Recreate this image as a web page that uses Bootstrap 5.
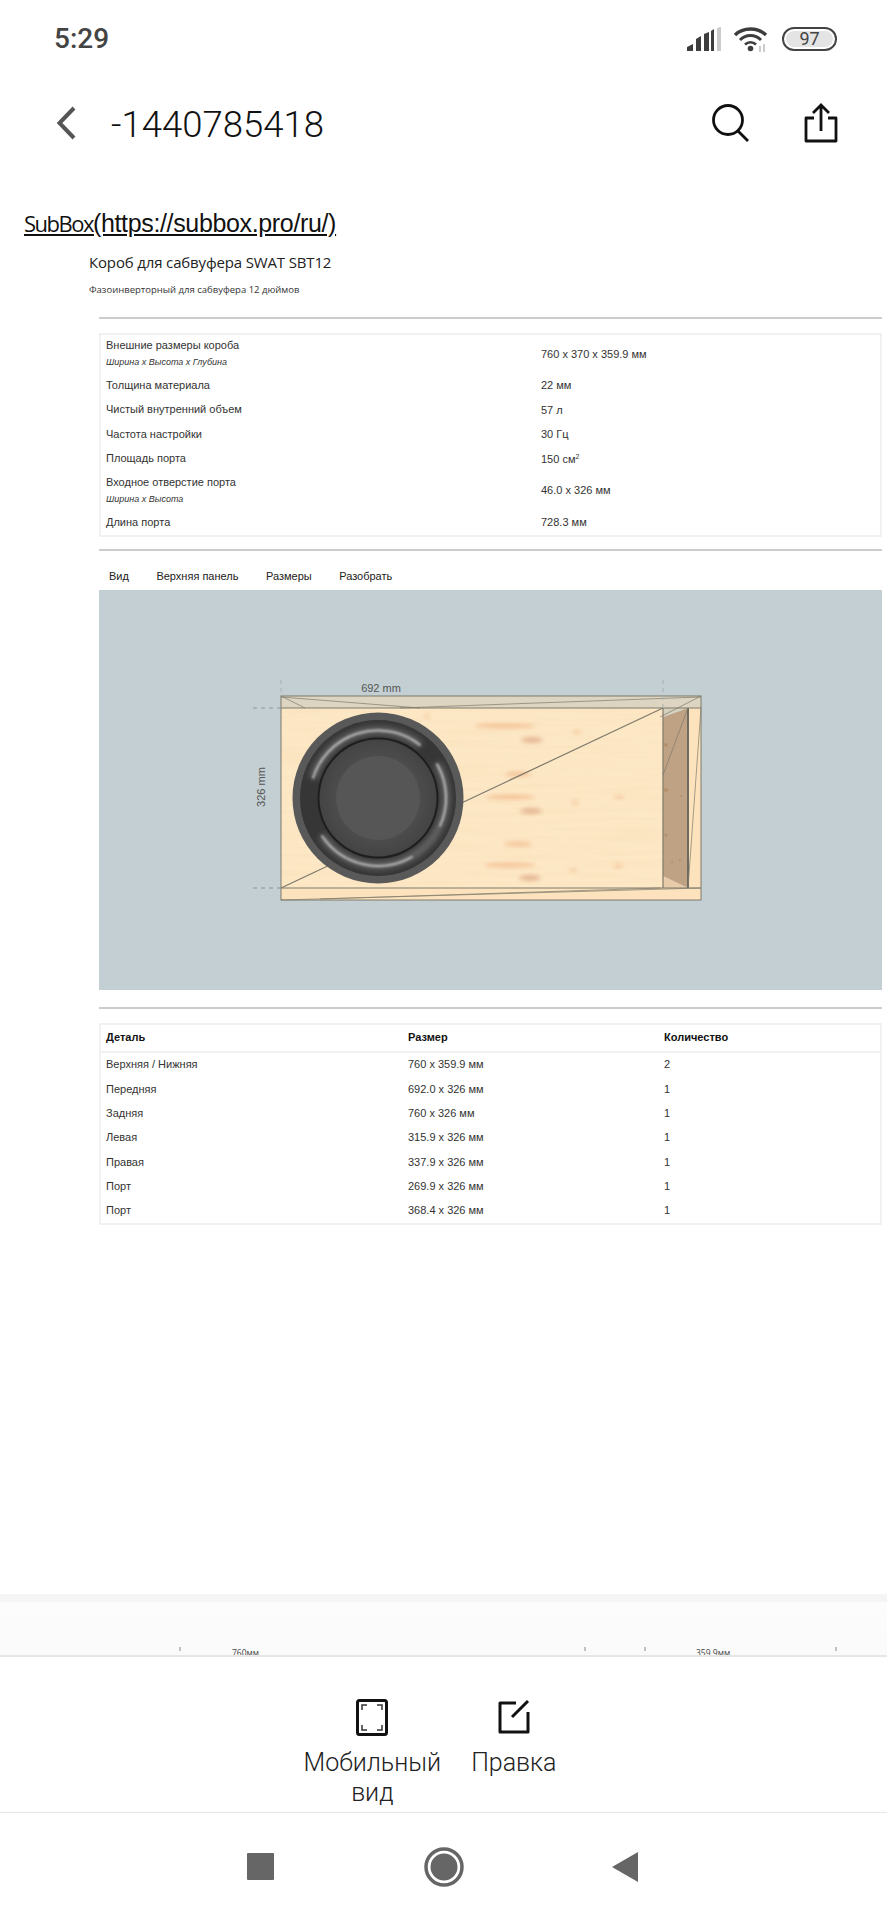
<!DOCTYPE html>
<html lang="ru">

<head>
    <meta charset="UTF-8">
    <meta name="viewport" content="width=device-width, initial-scale=1.0">
    <title>-1440785418</title>

    <link href="https://cdn.jsdelivr.net/npm/bootstrap@5.3.0/dist/css/bootstrap.min.css" rel="stylesheet">

    <style>
        body {
            width: 887px;
            height: 1920px;
            overflow: hidden;
            background: #fff;
            font-family: Roboto, "Liberation Sans", sans-serif;
        }

        .phone {
            height: 1920px;
        }

        /* status bar */
        .status-bar {
            height: 78px;
            padding: 0 50px 0 54px;
        }

        .status-time {
            font-size: 28px;
            font-weight: 500;
            color: #444;
            line-height: 1;
        }

        .battery {
            width: 55px;
            height: 24px;
            border: 2px solid #444;
            border-radius: 12px;
            padding: 2px;
            margin-left: 13px;
        }

        .battery-fill {
            background: #e4e4e4;
            border-radius: 8px;
            color: #444;
            font-size: 18px;
            line-height: 16px;
            height: 16px;
            text-align: center;
        }

        /* app header */
        .app-header {
            height: 90px;
            padding: 0 49px 0 56px;
        }

        .app-title {
            font-size: 36.5px;
            font-weight: 300;
            color: #111;
            line-height: 1;
            margin: 4px 0 0 34px;
        }

        .app-search {
            margin-right: 55px;
        }

        /* document */
        .doc {
            height: 1487px;
            overflow: hidden;
            padding-top: 40px;
        }

        .doc-link {
            margin-left: 24px;
            font-size: 25px;
            line-height: 30px;
            color: #111;
            font-family: "Liberation Sans", sans-serif;
            text-decoration: underline;
            letter-spacing: -.35px;
            height: 30px;
        }

        .doc-link-brand {
            font-family: "Open Sans", sans-serif;
            font-size: 22px;
            letter-spacing: -1.5px;
        }

        .doc-title {
            margin: 12px 0 0 89px;
            font-family: "Open Sans", sans-serif;
            font-size: 15px;
            line-height: 24px;
            color: #222;
            letter-spacing: -.15px;
        }

        .doc-sub {
            margin: 6px 0 0 89px;
            font-family: "Open Sans", sans-serif;
            font-size: 9.5px;
            line-height: 20px;
            color: #333;
        }

        .doc-body {
            margin-left: 99px;
            width: 783px;
            font-family: "Liberation Sans", sans-serif;
            font-size: 11px;
            color: #333;
        }

        .doc-rule {
            height: 2px;
            background: #ccc;
        }

        .spec-box {
            border: 2px solid #f1f1f1;
        }

        .spec-row {
            height: 24.5px;
            padding-left: 5px;
        }

        .spec-row-tall {
            height: 38px;
        }

        .spec-row-port {
            height: 39px;
        }

        .spec-name {
            width: 435px;
            line-height: 17px;
        }

        .spec-name em {
            display: block;
            font-size: 9px;
        }

        .spec-value sup {
            font-size: 7px;
        }

        .view-tabs {
            height: 39px;
            padding: 0 10px 5px;
            gap: 27.5px;
            color: #222;
        }

        .view-canvas {
            height: 400px;
            background: #c3cfd2;
        }

        .view-canvas svg {
            display: block;
        }

        .parts-head {
            height: 28px;
            border-bottom: 2px solid #f1f1f1;
            font-weight: 700;
            color: #111;
        }

        .parts-row {
            height: 24.3px;
        }

        .parts-head,
        .parts-row {
            padding-left: 5px;
        }

        .parts-a {
            width: 302px;
        }

        .parts-b {
            width: 256px;
        }

        /* next page, cut off by the bottom sheet */
        .page-gap {
            margin-top: 369px;
            height: 8px;
            background: #f5f5f5;
        }

        .page-next {
            height: 60px;
            background: linear-gradient(#fcfcfc, #fafafa);
        }

        .page-next svg {
            display: block;
        }

        /* bottom sheet */
        .sheet {
            height: 158px;
            border-top: 2px solid #e6e6e6;
            border-bottom: 1px solid #e6e6e6;
            padding: 42px 27px 0 0;
            gap: 30px;
        }

        .sheet-action {
            color: #222;
            font-size: 25px;
            font-weight: 300;
            line-height: 30px;
            text-align: center;
        }

        .sheet-action svg {
            display: block;
            margin: 0 auto 12px;
        }

        .nav-bar {
            height: 107px;
            padding-right: 3px;
        }

        .nav-home {
            margin: 0 148px 0 150px;
        }
    </style>
</head>

<body>
    <div class="phone d-flex flex-column">

        <!-- Status bar -->
        <div class="status-bar d-flex align-items-center justify-content-between">
            <span class="status-time">5:29</span>
            <div class="d-flex align-items-center">
                <svg width="34" height="24" viewBox="0 0 34 24" class="me-2">
                    <path d="M0 24v-4l6-3v7z M9 24V12l5-3v15z M17 24V7l5-2v19z" fill="#3d3d3d" />
                    <path d="M24 24V4l3-2v22z" fill="#3d3d3d" />
                    <path d="M30 24V1l4-1v24z" fill="#ccc" />
                </svg>
                <svg width="36" height="26" viewBox="0 0 36 26" class="ms-1">
                    <path d="M2 9C10 1 25 1 33 9" fill="none" stroke="#3d3d3d" stroke-width="3.4" />
                    <path d="M7 14C13 8 22 8 28 14" fill="none" stroke="#3d3d3d" stroke-width="3" />
                    <path d="M12 18.500C15 15.500 20 15.500 23 18.500" fill="none" stroke="#3d3d3d" stroke-width="2.600" />
                    <circle cx="17.500" cy="22.500" r="2.800" fill="#3d3d3d" />
                    <path d="M27 20v6M31 18v8" stroke="#ccc" stroke-width="2" />
                </svg>
                <div class="battery">
                    <div class="battery-fill">97</div>
                </div>
            </div>
        </div>

        <!-- Header -->
        <div class="app-header d-flex align-items-center">
            <svg width="21" height="34" viewBox="0 0 21 34">
                <path d="M18 2L3.500 17L18 32" fill="none" stroke="#555" stroke-width="4" />
            </svg>
            <span class="app-title flex-grow-1">-1440785418</span>
            <svg width="37" height="38" viewBox="0 0 37 38" class="app-search">
                <circle cx="16" cy="16" r="14.500" fill="none" stroke="#111" stroke-width="2.800" />
                <path d="M26 27l10 10" stroke="#111" stroke-width="2.800" />
            </svg>
            <svg width="34" height="40" viewBox="0 0 34 40">
                <path d="M10 15H2v23h30V15h-8" fill="none" stroke="#111" stroke-width="2.800" stroke-linejoin="round" />
                <path d="M17 28V3M9 10l8-8 8 8" fill="none" stroke="#111" stroke-width="2.800" />
            </svg>
        </div>

        <!-- Document -->
        <div class="doc">
            <div class="doc-link"><span class="doc-link-brand">SubBox</span>(https://subbox.pro/ru/)</div>
            <div class="doc-title">Короб для сабвуфера SWAT SBT12</div>
            <div class="doc-sub">Фазоинверторный для сабвуфера 12 дюймов</div>

            <div class="doc-body">
                <div class="doc-rule" style="margin-top: 17px"></div>

                <div class="spec-box" style="margin-top: 14px">
                    <div class="spec-row spec-row-tall d-flex align-items-center">
                        <div class="spec-name">Внешние размеры короба<em>Ширина x Высота x Глубина</em></div>
                        <div class="spec-value">760 x 370 x 359.9 мм</div>
                    </div>
                    <div class="spec-row d-flex align-items-center">
                        <div class="spec-name">Толщина материала</div>
                        <div class="spec-value">22 мм</div>
                    </div>
                    <div class="spec-row d-flex align-items-center">
                        <div class="spec-name">Чистый внутренний объем</div>
                        <div class="spec-value">57 л</div>
                    </div>
                    <div class="spec-row d-flex align-items-center">
                        <div class="spec-name">Частота настройки</div>
                        <div class="spec-value">30 Гц</div>
                    </div>
                    <div class="spec-row d-flex align-items-center">
                        <div class="spec-name">Площадь порта</div>
                        <div class="spec-value">150 см<sup>2</sup></div>
                    </div>
                    <div class="spec-row spec-row-port d-flex align-items-center">
                        <div class="spec-name">Входное отверстие порта<em>Ширина x Высота</em></div>
                        <div class="spec-value">46.0 x 326 мм</div>
                    </div>
                    <div class="spec-row d-flex align-items-center">
                        <div class="spec-name">Длина порта</div>
                        <div class="spec-value">728.3 мм</div>
                    </div>
                </div>

                <div class="doc-rule" style="margin-top: 12px"></div>

                <div class="view-tabs d-flex align-items-end">
                    <span>Вид</span>
                    <span>Верхняя панель</span>
                    <span>Размеры</span>
                    <span>Разобрать</span>
                </div>

                <div class="view-canvas">
                    <svg width="783" height="400" viewBox="99 590 783 400">
                        <defs>
                            <filter id="blur1" x="-50%" y="-50%" width="200%" height="200%">
                                <feGaussianBlur stdDeviation="2.200" />
                            </filter>
                            <filter id="blur2" x="-20%" y="-20%" width="140%" height="140%">
                                <feGaussianBlur stdDeviation="1" />
                            </filter>
                            <filter id="blur3" x="-20%" y="-20%" width="140%" height="140%">
                                <feGaussianBlur stdDeviation="3" />
                            </filter>
                            <filter id="grain" x="0" y="0" width="100%" height="100%">
                                <feTurbulence type="fractalNoise" baseFrequency=".012 .22" numOctaves="3" seed="4" />
                                <feColorMatrix values="0 0 0 0 .93  0 0 0 0 .72  0 0 0 0 .45  0 0 0 1.100 -.38" />
                            </filter>
                            <radialGradient id="cone">
                                <stop offset="0" stop-color="#595959" />
                                <stop offset=".7" stop-color="#575757" />
                                <stop offset=".72" stop-color="#4c4c4c" />
                                <stop offset="1" stop-color="#444" />
                            </radialGradient>
                        </defs>

                        <!-- box -->
                        <rect x="281" y="708" width="382" height="180" fill="#fde8c6" />
                        <rect x="281" y="708" width="382" height="180" filter="url(#grain)" opacity=".7" />
                        <g fill="#eda877" filter="url(#blur1)" opacity=".55">
                            <ellipse cx="505" cy="726" rx="30" ry="2.500" />
                            <ellipse cx="518" cy="774" rx="13" ry="2.500" />
                            <ellipse cx="510" cy="797" rx="24" ry="2.500" />
                            <ellipse cx="518" cy="844" rx="14" ry="2.500" />
                            <ellipse cx="510" cy="865" rx="26" ry="2.500" />
                            <ellipse cx="577" cy="732" rx="4" ry="1.500" />
                            <ellipse cx="619" cy="797" rx="5" ry="1.500" />
                            <ellipse cx="575" cy="802" rx="4" ry="1.500" />
                            <ellipse cx="618" cy="866" rx="5" ry="1.500" />
                            <ellipse cx="573" cy="870" rx="4" ry="1.500" />
                            <ellipse cx="427" cy="716" rx="3" ry="1.500" />
                        </g>
                        <g fill="#dca482" filter="url(#blur1)" opacity=".7">
                            <ellipse cx="532" cy="740" rx="11" ry="3" />
                            <ellipse cx="531" cy="811" rx="11" ry="3" />
                            <ellipse cx="530" cy="878" rx="11" ry="3" />
                        </g>
                        <rect x="281" y="696" width="420" height="12" fill="#ddd5c2" />
                        <rect x="281" y="888" width="420" height="12" fill="#fde3bd" />
                        <rect x="688" y="708" width="13" height="180" fill="#fde3bd" />
                        <path d="M663 717L688 708V888L663 876Z" fill="#bfa284" />
                        <path d="M663 876L688 888H663Z" fill="#e8cba8" />
                        <path d="M663 708H688L663 717Z" fill="#d6d0bf" />
                        <g fill="#b08a64" opacity=".7">
                            <circle cx="666" cy="745" r="2" />
                            <circle cx="666" cy="790" r="2" />
                            <circle cx="666" cy="835" r="1.500" />
                            <circle cx="672" cy="800" r="1" />
                            <circle cx="681" cy="796" r="1" />
                            <circle cx="672" cy="862" r="1" />
                            <circle cx="680" cy="860" r="1" />
                        </g>

                        <!-- mesh lines -->
                        <g fill="none" stroke="#7f7a6c" stroke-width="1">
                            <rect x="281" y="696" width="420" height="204" />
                            <path d="M281 708H701M281 888H701M663 708V888" stroke-width="1.200" />
                            <path d="M688 708V888" stroke-width="2" stroke="#6f6a60" />
                            <path d="M281 696L305 708M281 697L420 708M400 708L701 697M281 900L701 888M320 899L660 888M688 888L701 708M663 775L688 708M660 717L701 696" opacity=".7" />
                            <path d="M281 888L663 708" stroke-width="1.200" />
                        </g>
                        <path d="M281 680V696M663 680V708" stroke="#aab2b2" stroke-dasharray="4 4" fill="none" />
                        <path d="M253 708H281M253 888H281" stroke="#8f9698" stroke-dasharray="4 4" fill="none" />
                        <text x="381" y="692" text-anchor="middle" font-size="11" font-family="Liberation Sans" fill="#555">692 mm</text>
                        <text transform="translate(265 787) rotate(-90)" text-anchor="middle" font-size="11" font-family="Liberation Sans" fill="#555">326 mm</text>

                        <!-- speaker -->
                        <circle cx="378" cy="798" r="85.500" fill="#595959" />
                        <circle cx="378" cy="798" r="78" fill="#363636" />
                        <g fill="none" stroke="#6a6a6a" stroke-width="7" filter="url(#blur3)">
                            <path d="M313 778A68 68 0 0 1 420 745" />
                            <path d="M437 764A68 68 0 0 1 440 826" />
                            <path d="M322 836A68 68 0 0 0 444 814" />
                        </g>
                        <g fill="none" stroke="#c8c8c8" stroke-width="1.800" stroke-linecap="round" filter="url(#blur2)">
                            <path d="M313 778A68 68 0 0 1 420 745" />
                            <path d="M437 764A68 68 0 0 1 440 826" />
                            <path d="M322 836A68 68 0 0 0 412 857" />
                        </g>
                        <circle cx="378" cy="798" r="60.500" fill="#1e1e1e" />
                        <circle cx="378" cy="798" r="58.500" fill="url(#cone)" />
                        <circle cx="378" cy="798" r="42" fill="#565656" />
                    </svg>
                </div>

                <div class="doc-rule" style="margin-top: 17px"></div>

                <div class="spec-box" style="margin-top: 14px">
                    <div class="parts-head d-flex align-items-center">
                        <div class="parts-a">Деталь</div>
                        <div class="parts-b">Размер</div>
                        <div>Количество</div>
                    </div>
                    <div class="parts-row d-flex align-items-center">
                        <div class="parts-a">Верхняя / Нижняя</div>
                        <div class="parts-b">760 x 359.9 мм</div>
                        <div>2</div>
                    </div>
                    <div class="parts-row d-flex align-items-center">
                        <div class="parts-a">Передняя</div>
                        <div class="parts-b">692.0 x 326 мм</div>
                        <div>1</div>
                    </div>
                    <div class="parts-row d-flex align-items-center">
                        <div class="parts-a">Задняя</div>
                        <div class="parts-b">760 x 326 мм</div>
                        <div>1</div>
                    </div>
                    <div class="parts-row d-flex align-items-center">
                        <div class="parts-a">Левая</div>
                        <div class="parts-b">315.9 x 326 мм</div>
                        <div>1</div>
                    </div>
                    <div class="parts-row d-flex align-items-center">
                        <div class="parts-a">Правая</div>
                        <div class="parts-b">337.9 x 326 мм</div>
                        <div>1</div>
                    </div>
                    <div class="parts-row d-flex align-items-center">
                        <div class="parts-a">Порт</div>
                        <div class="parts-b">269.9 x 326 мм</div>
                        <div>1</div>
                    </div>
                    <div class="parts-row d-flex align-items-center">
                        <div class="parts-a">Порт</div>
                        <div class="parts-b">368.4 x 326 мм</div>
                        <div>1</div>
                    </div>
                </div>
            </div>

            <div class="page-gap"></div>
            <div class="page-next">
                <svg width="887" height="60" viewBox="0 1605 887 60">
                    <path d="M180 1650v4M585 1650v4M645 1650v4M836 1650v4" stroke="#888" />
                    <text x="232" y="1659" font-size="8.500" font-family="Open Sans" fill="#444">760мм</text>
                    <text x="696" y="1659" font-size="8.500" font-family="Open Sans" fill="#444">359.9мм</text>
                </svg>
            </div>
        </div>

        <!-- Bottom sheet -->
        <div class="sheet d-flex justify-content-center">
            <div class="sheet-action">
                <svg width="32" height="37" viewBox="0 0 32 37">
                    <rect x="1.500" y="1.500" width="29" height="34" rx="2" fill="none" stroke="#111" stroke-width="3" />
                    <path d="M6 11V6h5M26 11V6h-5M6 26v5h5M26 26v5h-5" fill="none" stroke="#333" stroke-width="1.500" />
                </svg>
                Мобильный<br>вид
            </div>
            <div class="sheet-action">
                <svg width="34" height="37" viewBox="0 0 34 37">
                    <path d="M19 4H3v29h28V13" fill="none" stroke="#111" stroke-width="3" stroke-linejoin="round" />
                    <path d="M15 18L31 2" fill="none" stroke="#111" stroke-width="3" />
                </svg>
                Правка
            </div>
        </div>

        <!-- Android nav -->
        <div class="nav-bar d-flex align-items-center justify-content-center">
            <svg width="27" height="27" viewBox="0 0 27 27">
                <rect width="27" height="27" rx="1" fill="#666" />
            </svg>
            <svg width="40" height="40" viewBox="0 0 40 40" class="nav-home">
                <circle cx="20" cy="20" r="18" fill="none" stroke="#666" stroke-width="3.500" />
                <circle cx="20" cy="20" r="13.500" fill="#666" />
            </svg>
            <svg width="26" height="30" viewBox="0 0 26 30">
                <path d="M26 0V30L0 15Z" fill="#666" />
            </svg>
        </div>
    </div>

    <script src="https://cdn.jsdelivr.net/npm/bootstrap@5.3.0/dist/js/bootstrap.bundle.min.js"></script>
</body>

</html>
